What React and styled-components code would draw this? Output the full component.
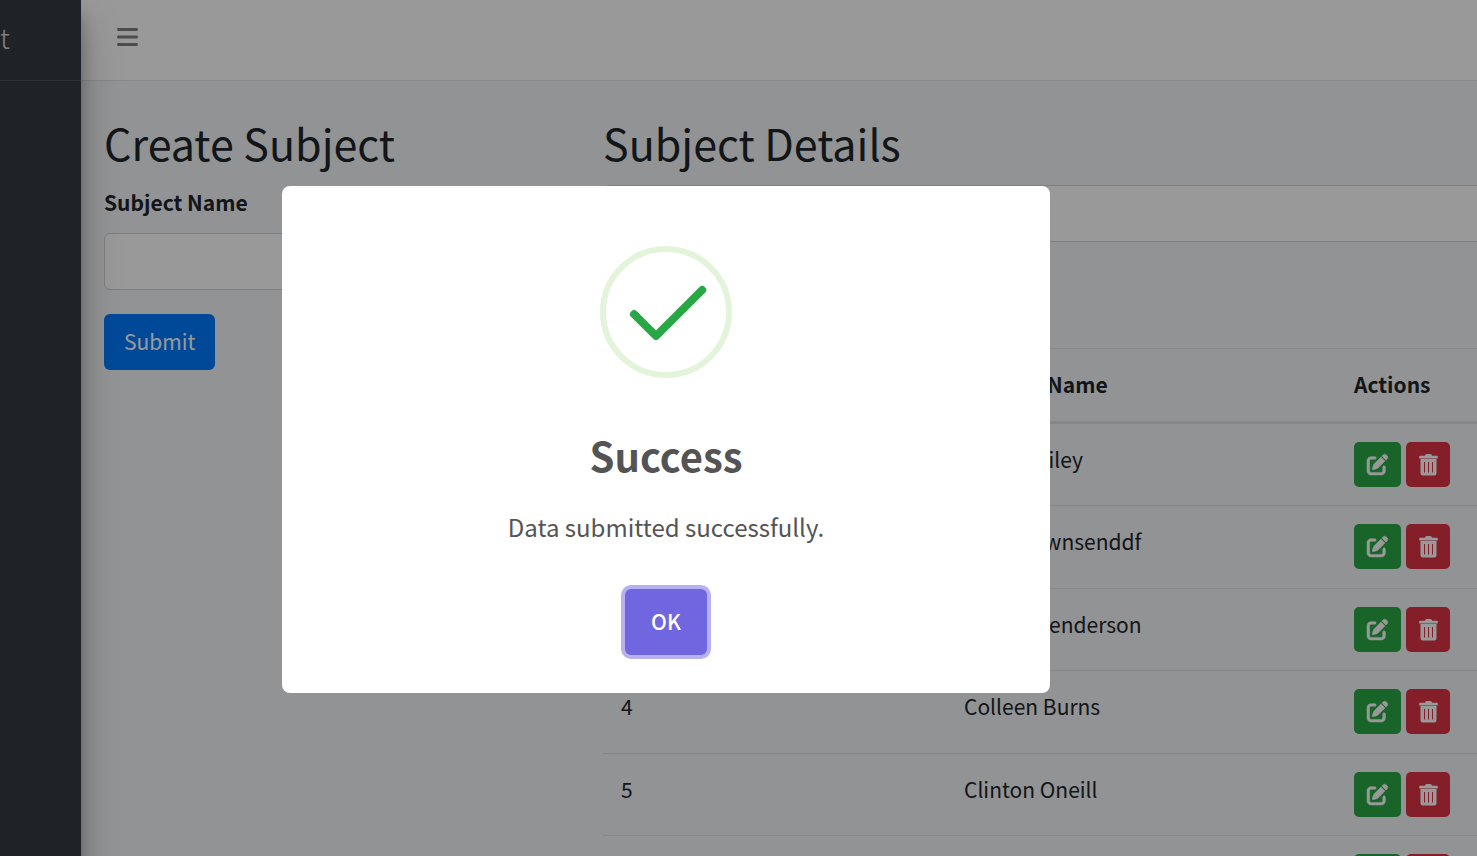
import React from "react";
import styled, { createGlobalStyle } from "styled-components";
import { FaBars, FaPenToSquare } from "react-icons/fa6";

const GlobalStyle = createGlobalStyle`
  *, *::before, *::after { box-sizing: border-box; }
  html, body { margin: 0; height: 100%; overflow: hidden; }
  body {
    font-family: "Noto Sans CJK JP", "Noto Sans", sans-serif;
    font-size: 21px;
    line-height: 34px;
    color: #212529;
    background: #f4f6f9;
  }
  button, input { font: inherit; }
`;

const Shell = styled.div`
  display: grid;
  grid-template-columns: 81px minmax(0, 1fr);
  height: 100vh;
  overflow: hidden;
`;

const Sidebar = styled.aside`
  position: relative;
  z-index: 1;
  background: #343a40;
  box-shadow: 0 21px 42px rgba(0, 0, 0, 0.25), 0 15px 15px rgba(0, 0, 0, 0.22);
`;

const Brand = styled.a`
  display: flex;
  align-items: center;
  height: 81px;
  padding-bottom: 6px;
  border-bottom: 1px solid #4b545c;
  color: rgba(255, 255, 255, 0.8);
  font-size: 28px;
  font-weight: 300;
  text-decoration: none;
`;

const Main = styled.div`
  min-width: 0;
`;

const Navbar = styled.header`
  display: flex;
  align-items: center;
  height: 81px;
  padding: 0 36px 6px;
  background: #fff;
  border-bottom: 1px solid #dee2e6;
`;

const MenuButton = styled.button`
  display: flex;
  padding: 0;
  border: 0;
  background: none;
  color: rgba(0, 0, 0, 0.5);
  font-size: 24px;

  svg { width: 21px; height: 24px; }
`;

const Content = styled.main`
  display: grid;
  grid-template-columns: 477fr 874fr;
  gap: 22px;
  padding: 34px 0 0 23px;
`;

const Section = styled.section`
  min-width: 0;
`;

const Heading = styled.h1`
  margin: 0 0 16px;
  font-size: 43px;
  font-weight: 400;
  line-height: 54px;
`;

const Label = styled.label`
  display: block;
  margin-bottom: 14px;
  font-weight: 700;
`;

const TextInput = styled.input`
  display: block;
  width: 100%;
  height: 57px;
  padding: 9px 18px;
  border: 1px solid #ced4da;
  border-radius: 6px;
  background: #fff;
  color: #495057;
`;

const SearchInput = styled(TextInput)`
  border-right: 0;
  border-radius: 6px 0 0 6px;
`;

const SubmitButton = styled.button`
  height: 56px;
  margin-top: 24px;
  padding: 0 20px 2px;
  border: 0;
  border-radius: 6px;
  background: #007bff;
  color: #fff;
`;

const Table = styled.table`
  width: 100%;
  margin-top: 106px;
  border-collapse: separate;
  border-spacing: 0;
  table-layout: fixed;
`;

const HeadCell = styled.th`
  width: ${({ $width }) => $width};
  padding: 18px 18px 20px;
  border-top: 1px solid #dee2e6;
  border-bottom: 3px solid #dee2e6;
  font-weight: 700;
  text-align: left;
`;

const Row = styled.tr`
  height: 82px;

  &:nth-child(even) { height: 83px; }
`;

const Cell = styled.td`
  padding: 18px 18px 17px;
  border-bottom: 1px solid #dee2e6;
  vertical-align: top;
  white-space: nowrap;
`;

const Actions = styled.div`
  display: flex;
  gap: 5px;
`;

const ActionButton = styled.button`
  display: flex;
  align-items: center;
  justify-content: center;
  width: ${({ $danger }) => ($danger ? "44px" : "47px")};
  height: 45px;
  padding: 0;
  border: 0;
  border-radius: 5px;
  background: ${({ $danger }) => ($danger ? "#dc3545" : "#28a745")};
  color: #fff;
`;

const EditIcon = styled(FaPenToSquare)`
  width: 21px;
  height: 21px;
  overflow: visible;
  stroke: currentColor;
  stroke-width: 12px;
`;

const TrashIcon = () => (
  <svg width="19" height="22" viewBox="0 0 19 22" aria-hidden="true">
    <path
      fill="currentColor"
      d="M6.6.6Q6.9 0 7.6 0h3.8q.7 0 1 .6l.7 1.2h4.9q.8 0 .8.8v1.3q0 .6-.8.6H1q-.8 0-.8-.6V2.6q0-.8.8-.8h4.9z"
    />
    <path
      fill="currentColor"
      fillRule="evenodd"
      d="M1.5 5h16v14.3q0 2.2-2.2 2.2H3.7q-2.2 0-2.2-2.2zM5 8v10.5h1V8zM9 8v10.5h1V8zM13 8v10.5h1V8z"
    />
  </svg>
);

const Backdrop = styled.div`
  position: fixed;
  inset: 0;
  z-index: 10;
  display: grid;
  place-items: center;
  padding: 23px 145px 0 0;
  background: rgba(0, 0, 0, 0.4);
`;

const Dialog = styled.div`
  display: flex;
  flex-direction: column;
  align-items: center;
  width: 768px;
  max-width: 100%;
  padding: 60px 24px 38px;
  border-radius: 8px;
  background: #fff;
  color: #545454;
  text-align: center;
`;

const SuccessIcon = styled.svg`
  display: block;
  width: 132px;
  height: 132px;
`;

const DialogTitle = styled.h2`
  margin: 52px 0 0;
  font-size: 40px;
  font-weight: 700;
  line-height: 50px;
`;

const DialogText = styled.p`
  margin: 30px 0 0;
  font-size: 24px;
  line-height: 34px;
`;

const ConfirmButton = styled.button`
  height: 66px;
  margin-top: 45px;
  padding: 0 26px 2px;
  border: 0;
  border-radius: 6px;
  outline: 0;
  background: #7066e0;
  box-shadow: 0 0 0 4px rgba(112, 102, 224, 0.5);
  color: #fff;
  font-weight: 500;
`;

const subjects = [
  { id: 1, name: "Robert Riley" },
  { id: 2, name: "Alexa Townsenddf" },
  { id: 3, name: "Cecilia Henderson" },
  { id: 4, name: "Colleen Burns" },
  { id: 5, name: "Clinton Oneill" },
  { id: 6, name: "" },
];

export default function App() {
  return (
    <>
      <GlobalStyle />
      <Shell>
        <Sidebar>
          <Brand href="#">t</Brand>
        </Sidebar>
        <Main>
          <Navbar>
            <MenuButton type="button" aria-label="Toggle menu">
              <FaBars />
            </MenuButton>
          </Navbar>
          <Content>
            <Section>
              <Heading>Create Subject</Heading>
              <form onSubmit={(event) => event.preventDefault()}>
                <Label htmlFor="subject-name">Subject Name</Label>
                <TextInput id="subject-name" type="text" />
                <SubmitButton type="submit">Submit</SubmitButton>
              </form>
            </Section>
            <Section>
              <Heading>Subject Details</Heading>
              <SearchInput type="search" aria-label="Search subjects" />
              <Table>
                <thead>
                  <tr>
                    <HeadCell $width="343px">ID</HeadCell>
                    <HeadCell>Subject Name</HeadCell>
                    <HeadCell $width="141px">Actions</HeadCell>
                  </tr>
                </thead>
                <tbody>
                  {subjects.map(({ id, name }) => (
                    <Row key={id}>
                      <Cell>{id}</Cell>
                      <Cell>{name}</Cell>
                      <Cell>
                        <Actions>
                          <ActionButton type="button" aria-label="Edit">
                            <EditIcon />
                          </ActionButton>
                          <ActionButton type="button" aria-label="Delete" $danger>
                            <TrashIcon />
                          </ActionButton>
                        </Actions>
                      </Cell>
                    </Row>
                  ))}
                </tbody>
              </Table>
            </Section>
          </Content>
        </Main>
      </Shell>
      <Backdrop>
        <Dialog role="dialog" aria-modal="true" aria-labelledby="dialog-title">
          <SuccessIcon viewBox="0 0 132 132" fill="none" aria-hidden="true">
            <circle cx="66" cy="66" r="63" stroke="#e4f4db" strokeWidth="6" />
            <path
              d="M34 68.2 56 90 102.2 44"
              stroke="#28a745"
              strokeWidth="8"
              strokeLinecap="round"
              strokeLinejoin="round"
            />
          </SuccessIcon>
          <DialogTitle id="dialog-title">Success</DialogTitle>
          <DialogText>Data submitted successfully.</DialogText>
          <ConfirmButton type="button">OK</ConfirmButton>
        </Dialog>
      </Backdrop>
    </>
  );
}
